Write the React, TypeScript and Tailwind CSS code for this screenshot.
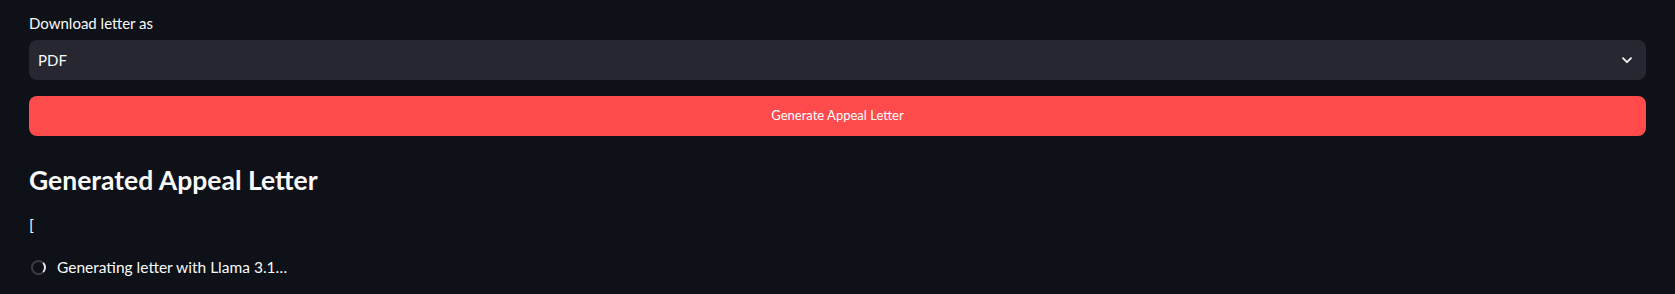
import React from 'react';

const font = { fontFamily: '"Source Sans Pro", Lato, "Noto Sans", sans-serif' };

export default function App() {
  return (
    <div
      className="min-h-[294px] w-full bg-[#0e1117] px-[29px] pt-[14px] text-[#fafafa]"
      style={font}
    >
      {/* Select */}
      <label className="block text-[15px] leading-[18px] mb-[8px]">Download letter as</label>
      <div className="flex h-[40px] items-center justify-between rounded-[8px] bg-[#262730] pl-[9px] pr-[14px]">
        <span className="text-[15px]">PDF</span>
        <svg width="10" height="7" viewBox="0 0 10 7" fill="none">
          <path d="M1 1.2 L5 5.2 L9 1.2" stroke="#fafafa" strokeWidth="1.8" strokeLinecap="round" strokeLinejoin="round" />
        </svg>
      </div>

      {/* Button */}
      <button className="mt-[16px] flex h-[40px] w-full items-center justify-center rounded-[8px] bg-[#ff4b4b] text-[13px] text-white">
        Generate Appeal Letter
      </button>

      {/* Output */}
      <h3 className="mt-[27px] text-[26.5px] font-bold leading-[34px]">Generated Appeal Letter</h3>
      <p className="mt-[18px] text-[16px] leading-[20px]">[</p>
      <div className="mt-[21px] flex items-center gap-[11px] pl-[2px]">
        <div className="h-[15px] w-[15px] rounded-full border-[2px] border-[#3a3d46] border-r-[#e8e8ea]" />
        <span className="text-[15.5px]">Generating letter with Llama 3.1…</span>
      </div>
    </div>
  );
}
